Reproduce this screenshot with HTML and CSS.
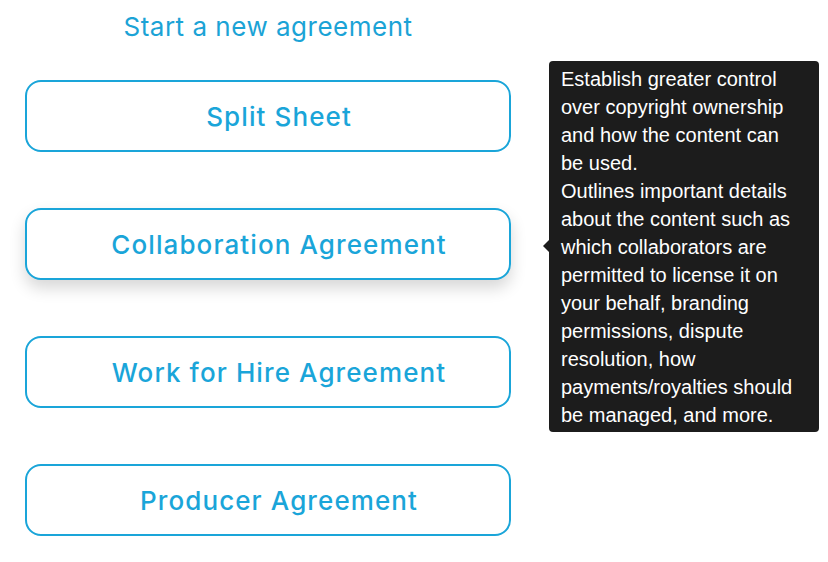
FILE: index.html
```html
<!DOCTYPE html>
<html lang="en">
<head>
  <meta charset="UTF-8" />
  <meta name="viewport" content="width=device-width, initial-scale=1.0"/>
  <title>Start a new agreement</title>
  <link rel="stylesheet" href="styles.css">
</head>
<body>
  <div class="picker">
    <h2 class="picker-title">Start a new agreement</h2>
    <button class="agreement">Split Sheet</button>
    <button class="agreement hover">Collaboration Agreement</button>
    <button class="agreement">Work for Hire Agreement</button>
    <button class="agreement">Producer Agreement</button>
  </div>

  <div class="tooltip">
    Establish greater control over copyright ownership and how the content can be used.<br>
    Outlines important details about the content such as which collaborators are permitted to license it on your behalf, branding permissions, dispute resolution, how payments/royalties should be managed, and more.
  </div>
</body>
</html>
```

FILE: styles.css
```css
body {
  margin: 0;
  background-color: #ffffff;
  font-family: Inter, Lato, "Noto Sans", sans-serif;
}
.picker {
  width: 486px;
  margin-left: 25px;
  padding-top: 11px;
  display: flex;
  flex-direction: column;
  gap: 56px;
}
.picker-title {
  margin: 0 0 -19px;
  height: 32px;
  line-height: 32px;
  text-align: center;
  font-size: 26px;
  font-weight: 400;
  letter-spacing: 0.5px;
  color: #1ba3d6;
}
.agreement {
  height: 72px;
  padding: 0 0 0 22px;
  border: 2px solid #1aa5d9;
  border-radius: 16px;
  background: #fff;
  color: #1aa5d9;
  font-family: inherit;
  font-size: 26px;
  font-weight: 500;
  letter-spacing: 1.1px;
  cursor: pointer;
}
.agreement.hover {
  box-shadow: 0 8px 16px rgba(0,0,0,0.16);
}
.tooltip {
  position: absolute;
  left: 549px;
  top: 61px;
  width: 240px;
  padding: 4px 18px 3px 12px;
  background-color: #1c1c1c;
  border-radius: 4px;
  color: #fff;
  font-family: "Liberation Sans", Arial, sans-serif;
  font-size: 20px;
  line-height: 28px;
}
.tooltip::before {
  content: "";
  position: absolute;
  left: -6px;
  top: 179px;
  border-style: solid;
  border-width: 6px 6px 6px 0;
  border-color: transparent #1c1c1c transparent transparent;
}
```
